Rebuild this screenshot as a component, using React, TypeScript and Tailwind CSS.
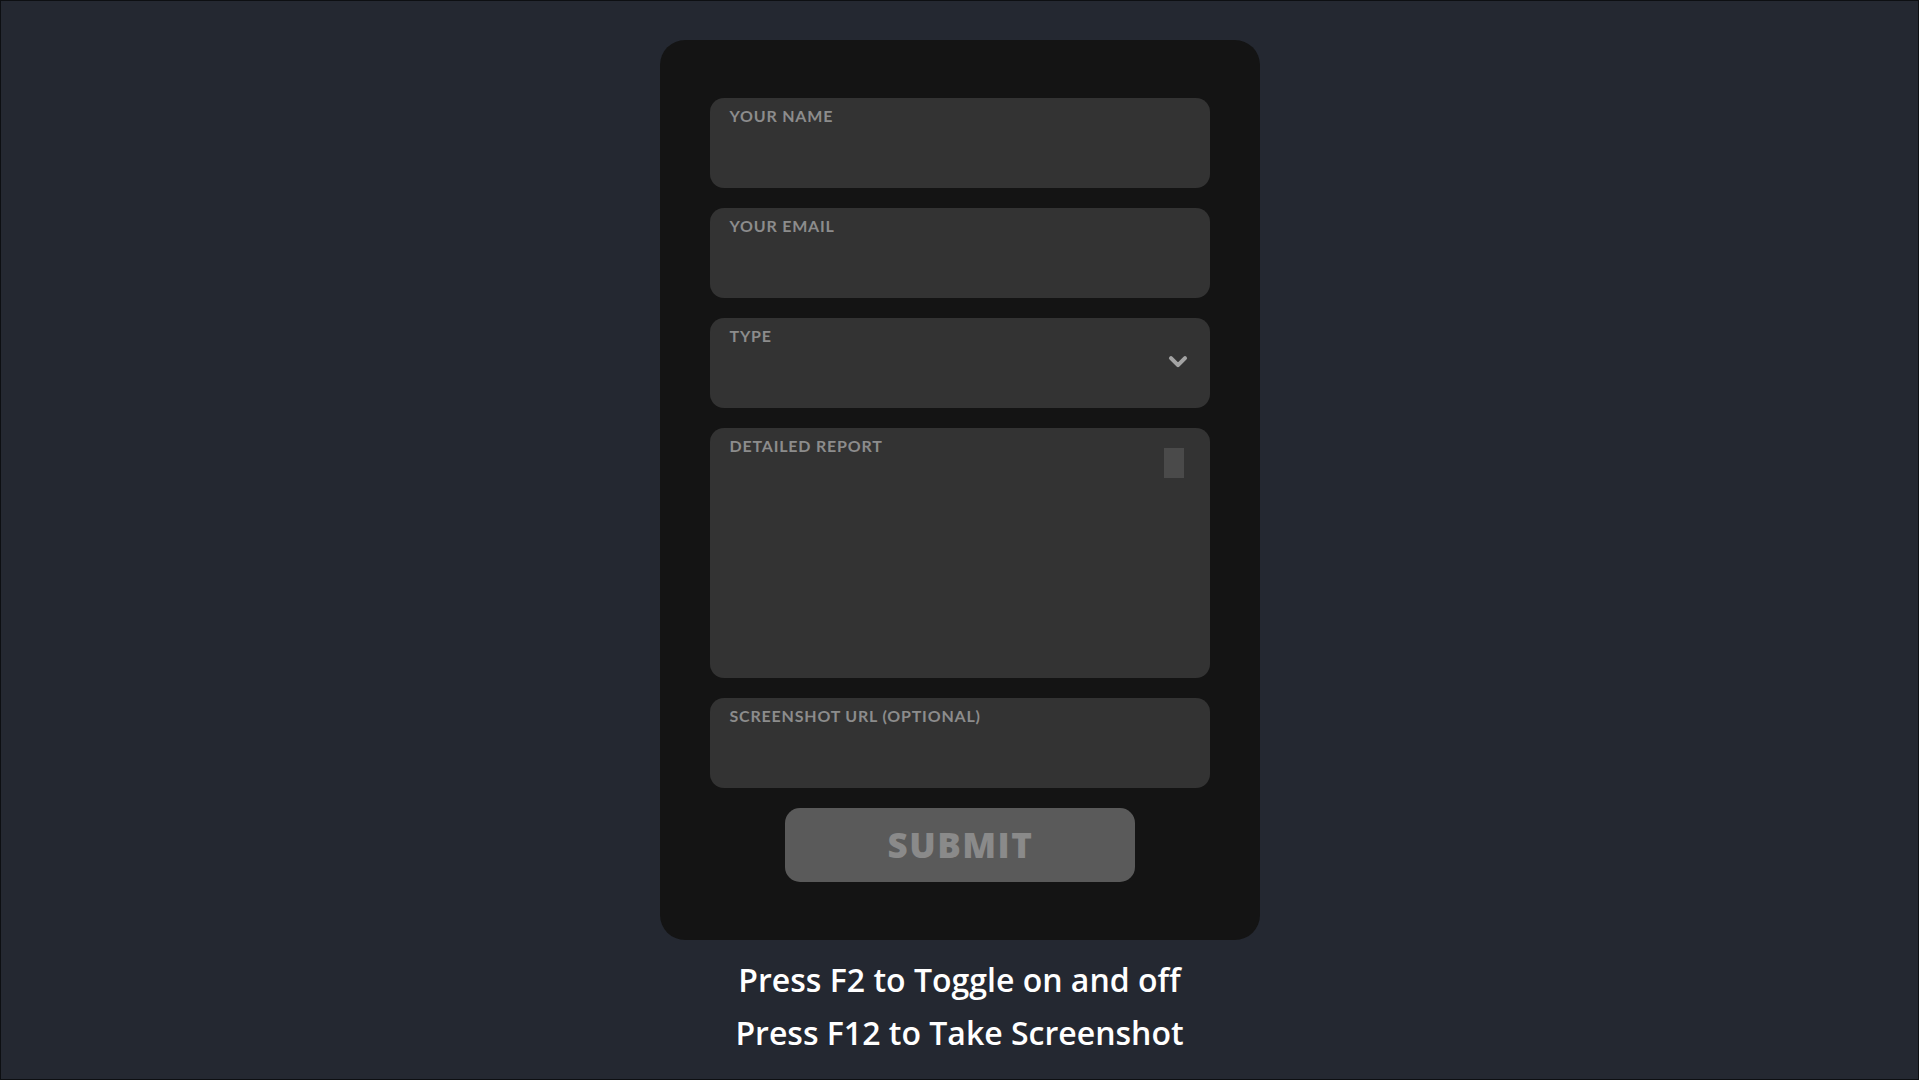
import { ChevronDown } from "lucide-react";

const fields = [
  { label: "YOUR NAME", kind: "input" },
  { label: "YOUR EMAIL", kind: "input" },
  { label: "TYPE", kind: "select" },
  { label: "DETAILED REPORT", kind: "textarea" },
  { label: "SCREENSHOT URL (OPTIONAL)", kind: "input" },
];

const Field = ({ label, kind }: { label: string; kind: string }) => {
  return (
    <div
      className={`relative w-full rounded-[14px] bg-[#333333] px-5 pt-[8px] ${
        kind === "textarea" ? "h-[250px]" : "h-[90px]"
      }`}
    >
      <span className="block font-['Lato',sans-serif] text-[16px] leading-5 font-bold tracking-[0.8px] text-[#8c8c8c]">
        {label}
      </span>
      {kind === "select" && (
        <ChevronDown
          aria-hidden="true"
          strokeWidth={3.5}
          className="absolute right-[18px] top-1/2 h-7 w-7 -translate-y-[55%] text-[#a3a3a3]"
        />
      )}
      {kind === "textarea" && (
        <div className="absolute right-[26px] top-5 h-[30px] w-5 bg-[#4a4a4a]" />
      )}
    </div>
  );
};

export default function App() {
  return (
    <div className="flex h-screen w-full flex-col items-center border border-[#0d0f12] bg-[#242831] pt-[39px]">
      <div className="flex h-[900px] w-[600px] flex-col items-center gap-5 rounded-[25px] bg-[#141414] px-[50px] pt-[58px]">
        {fields.map((f) => (
          <Field key={f.label} label={f.label} kind={f.kind} />
        ))}
        <button className="flex h-[74px] w-[350px] items-center justify-center rounded-[15px] bg-[#5a5a5a] pl-[2px] font-['Open_Sans',sans-serif] text-[35px] font-extrabold tracking-[1.5px] text-[#8a8a8a]">
          SUBMIT
        </button>
      </div>
      <div className="mt-[13px] flex flex-col items-center font-['Open_Sans',sans-serif] text-[32px] leading-[53px] font-semibold text-white">
        <span>Press F2 to Toggle on and off</span>
        <span>Press F12 to Take Screenshot</span>
      </div>
    </div>
  );
}
